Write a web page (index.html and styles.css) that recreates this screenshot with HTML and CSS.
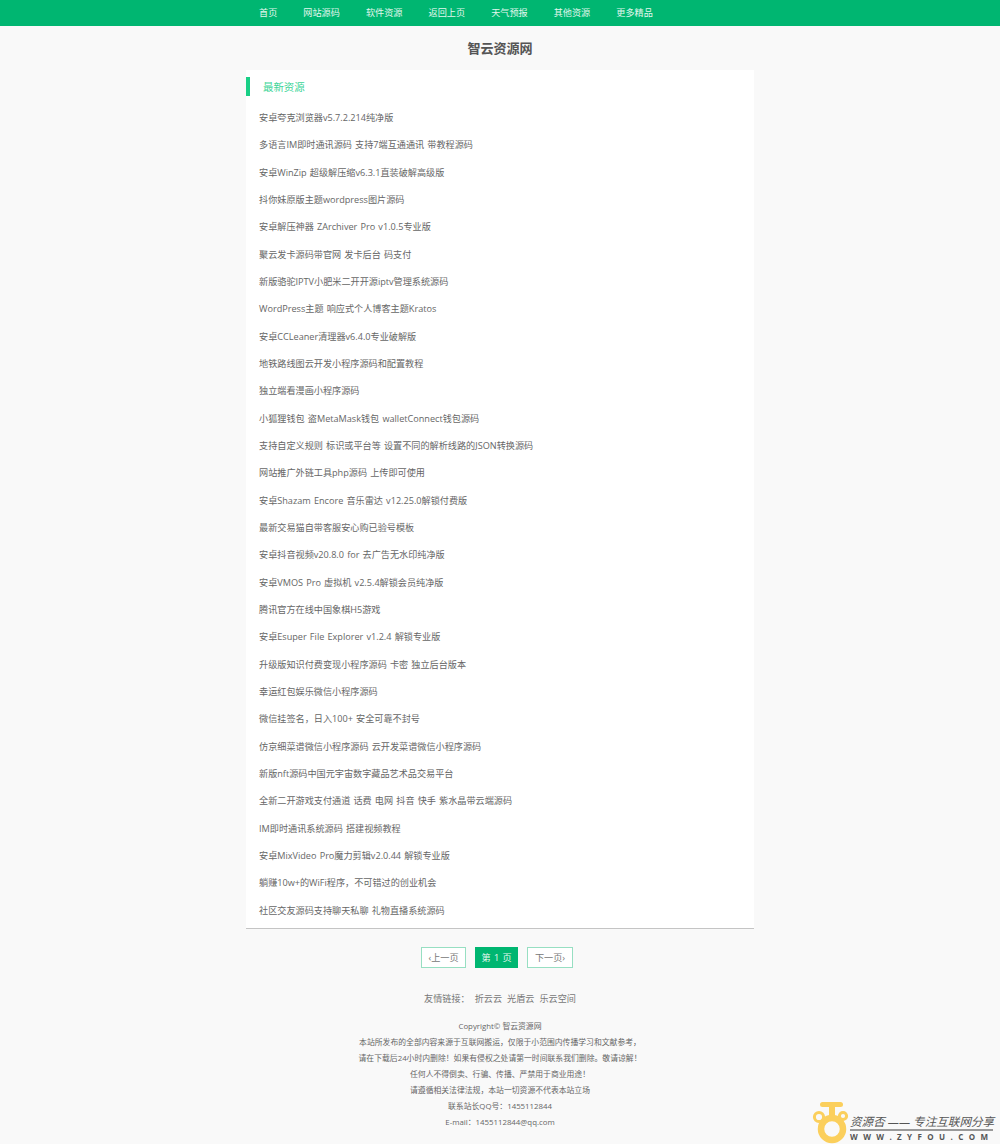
FILE: index.html
```html
<!DOCTYPE html>
<html lang="zh-CN">
<head>
<meta charset="utf-8">
<title>智云资源网</title>
<link rel="stylesheet" href="styles.css">
</head>
<body>
<header class="topbar">
  <nav class="nav">
    <a>首页</a><a>网站源码</a><a>软件资源</a><a>返回上页</a><a>天气预报</a><a>其他资源</a><a>更多精品</a>
  </nav>
</header>
<h1 class="site-title">智云资源网</h1>
<main class="panel">
  <h2 class="panel-title">最新资源</h2>
  <ul class="list">
    <li>安卓夸克浏览器v5.7.2.214纯净版</li>
    <li>多语言IM即时通讯源码 支持7端互通通讯 带教程源码</li>
    <li>安卓WinZip 超级解压缩v6.3.1直装破解高级版</li>
    <li>抖你妹原版主题wordpress图片源码</li>
    <li>安卓解压神器 ZArchiver Pro v1.0.5专业版</li>
    <li>聚云发卡源码带官网 发卡后台 码支付</li>
    <li>新版骆驼IPTV小肥米二开开源iptv管理系统源码</li>
    <li>WordPress主题 响应式个人博客主题Kratos</li>
    <li>安卓CCLeaner清理器v6.4.0专业破解版</li>
    <li>地铁路线图云开发小程序源码和配置教程</li>
    <li>独立端看漫画小程序源码</li>
    <li>小狐狸钱包 盗MetaMask钱包 walletConnect钱包源码</li>
    <li>支持自定义规则 标识或平台等 设置不同的解析线路的JSON转换源码</li>
    <li>网站推广外链工具php源码 上传即可使用</li>
    <li>安卓Shazam Encore 音乐雷达 v12.25.0解锁付费版</li>
    <li>最新交易猫自带客服安心购已验号模板</li>
    <li>安卓抖音视频v20.8.0 for 去广告无水印纯净版</li>
    <li>安卓VMOS Pro 虚拟机 v2.5.4解锁会员纯净版</li>
    <li>腾讯官方在线中国象棋H5游戏</li>
    <li>安卓Esuper File Explorer v1.2.4 解锁专业版</li>
    <li>升级版知识付费变现小程序源码 卡密 独立后台版本</li>
    <li>幸运红包娱乐微信小程序源码</li>
    <li>微信挂签名，日入100+ 安全可靠不封号</li>
    <li>仿京细菜谱微信小程序源码 云开发菜谱微信小程序源码</li>
    <li>新版nft源码中国元宇宙数字藏品艺术品交易平台</li>
    <li>全新二开游戏支付通道 话费 电网 抖音 快手 紫水晶带云端源码</li>
    <li>IM即时通讯系统源码 搭建视频教程</li>
    <li>安卓MixVideo Pro魔力剪辑v2.0.44 解锁专业版</li>
    <li>躺赚10w+的WiFi程序，不可错过的创业机会</li>
    <li>社区交友源码支持聊天私聊 礼物直播系统源码</li>
  </ul>
</main>
<div class="pager">
  <a class="page-btn btn-prev">‹上一页</a>
  <span class="page-current">第 1 页</span>
  <a class="page-btn btn-next">下一页›</a>
</div>
<div class="links">
  <span>友情链接：</span><a>折云云</a><a>光盾云</a><a>乐云空间</a>
</div>
<footer class="footer">
  <p>Copyright© 智云资源网</p>
  <p>本站所发布的全部内容来源于互联网搬运，仅限于小范围内传播学习和文献参考，</p>
  <p>请在下载后24小时内删除！如果有侵权之处请第一时间联系我们删除。敬请谅解！</p>
  <p>任何人不得倒卖、行骗、传播、严禁用于商业用途！</p>
  <p>请遵循相关法律法规，本站一切资源不代表本站立场</p>
  <p>联系站长QQ号：1455112844</p>
  <p>E-mail：1455112844@qq.com</p>
</footer>
<div class="watermark">
  <svg class="wm-logo" viewBox="0 0 38 42" width="38" height="42" aria-hidden="true">
    <rect x="8" y="0" width="23" height="5" rx="2.5" fill="#fbcf5c"/>
    <rect x="17" y="4" width="6" height="12" fill="#fbcf5c"/>
    <circle cx="7" cy="15" r="4.6" fill="none" stroke="#fbcf5c" stroke-width="3"/>
    <circle cx="31" cy="14" r="3.6" fill="none" stroke="#fbcf5c" stroke-width="3"/>
    <circle cx="20" cy="27" r="11" fill="none" stroke="#fbcf5c" stroke-width="6.5"/>
  </svg>
  <div class="wm-text">
    <div class="wm-line1">资源否 —— 专注互联网分享</div>
    <div class="wm-line2">WWW.ZYFOU.COM</div>
  </div>
</div>
</body>
</html>
```

FILE: styles.css
```css
* { box-sizing: border-box; }
html, body { margin: 0; padding: 0; }
body {
  height: 1144px;
  overflow: hidden;
  position: relative;
  background: #f9f9f9;
  color: #666;
  font-family: "Open Sans", "Noto Sans CJK SC", sans-serif;
  font-size: 9.14px;
}
.topbar { height: 26px; background: #00b671; }
.nav {
  width: 508px;
  margin: 0 auto;
  padding-left: 13px;
  display: flex;
  gap: 26.1px;
  line-height: 26px;
  color: #e3f7ee;
}
.site-title {
  margin: 0;
  height: 44px;
  padding-top: 12.5px;
  text-align: center;
  font-size: 13.06px;
  line-height: 18px;
  font-weight: 700;
  color: #555;
}
.panel {
  width: 508px;
  height: 859px;
  margin: 0 auto;
  background: #fff;
  border-bottom: 1px solid #c4c4c4;
  padding-top: 7px;
}
.panel-title {
  margin: 0;
  height: 19px;
  border-left: 4px solid #19cf86;
  padding-left: 13px;
  font-size: 10.45px;
  line-height: 20px;
  font-weight: 400;
  color: #3ed598;
}
.list {
  list-style: none;
  margin: 8px 0 0;
  padding: 0 0 0 13px;
}
.list li {
  height: 27.34px;
  line-height: 27.34px;
  white-space: nowrap;
  word-spacing: 0.8px;
  color: #666;
}
.pager {
  display: flex;
  justify-content: center;
  gap: 9px;
  margin-top: 18px;
  padding-right: 6px;
}
.page-btn, .page-current {
  height: 21px;
  line-height: 19.5px;
  text-align: center;
}
.page-btn { border: 1px solid #97dfc2; background: #fff; color: #777; }
.btn-prev { width: 45px; }
.btn-next { width: 46px; }
.page-current { width: 43px; background: #00b671; color: #e6f8f0; line-height: 21px; word-spacing: 1px; }
.links {
  display: flex;
  justify-content: center;
  gap: 5px;
  margin-top: 20px;
  line-height: 22px;
  color: #777;
}
.footer {
  margin-top: 8px;
  text-align: center;
  font-size: 7.84px;
  line-height: 16px;
  color: #666;
}
.footer p { margin: 0; }
.watermark {
  position: absolute;
  right: 0;
  bottom: 0;
  width: 188px;
  height: 42px;
  display: flex;
  align-items: flex-end;
}
.wm-logo { flex: none; }
.wm-text { width: 143px; padding-bottom: 2px; }
.wm-line1 {
  font-size: 11.6px;
  line-height: 13px;
  font-style: italic;
  color: #555;
  white-space: nowrap;
  border-bottom: 2px solid #999;
  padding-bottom: 1px;
}
.wm-line2 {
  font-size: 8px;
  line-height: 11px;
  font-weight: 700;
  letter-spacing: 5.4px;
  color: #555;
  white-space: nowrap;
}
```
